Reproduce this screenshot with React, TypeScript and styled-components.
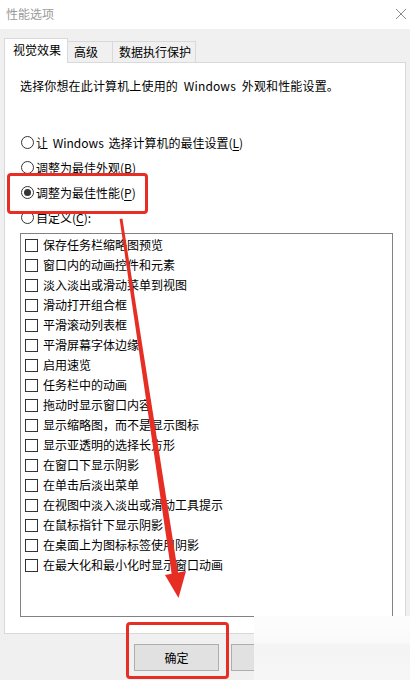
import React from 'react';
import styled, { createGlobalStyle } from 'styled-components';

const GlobalStyle = createGlobalStyle`
  html, body {
    margin: 0;
    padding: 0;
  }
  body {
    width: 410px;
    height: 680px;
    overflow: hidden;
    background: #f0f0f0;
    font-family: 'Noto Sans CJK SC', 'Noto Sans', sans-serif;
    font-size: 12px;
    color: #000;
  }
`;

const radios: { label: string; key: string; checked?: boolean }[] = [
  { label: '让 Windows 选择计算机的最佳设置', key: 'L' },
  { label: '调整为最佳外观', key: 'B' },
  { label: '调整为最佳性能', key: 'P', checked: true },
  { label: '自定义', key: 'C' },
];

const effects = [
  '保存任务栏缩略图预览',
  '窗口内的动画控件和元素',
  '淡入淡出或滑动菜单到视图',
  '滑动打开组合框',
  '平滑滚动列表框',
  '平滑屏幕字体边缘',
  '启用速览',
  '任务栏中的动画',
  '拖动时显示窗口内容',
  '显示缩略图，而不是显示图标',
  '显示亚透明的选择长方形',
  '在窗口下显示阴影',
  '在单击后淡出菜单',
  '在视图中淡入淡出或滑动工具提示',
  '在鼠标指针下显示阴影',
  '在桌面上为图标标签使用阴影',
  '在最大化和最小化时显示窗口动画',
];

export default function App() {
  return (
    <Window>
      <GlobalStyle />
      <TitleBar>
        <Title>性能选项</Title>
        <CloseIcon viewBox="0 0 10 10">
          <path d="M0 0 L10 10 M10 0 L0 10" stroke="#8a8a8a" strokeWidth="1" />
        </CloseIcon>
      </TitleBar>

      <TabStrip>
        <Tab $active $width={64}>视觉效果</Tab>
        <Tab $width={46}>高级</Tab>
        <Tab $width={84}>数据执行保护</Tab>
      </TabStrip>

      <Panel>
        <Intro>选择你想在此计算机上使用的 Windows 外观和性能设置。</Intro>
        <RadioGroup>
          {radios.map((r) => (
            <RadioRow key={r.key}>
              <Radio $checked={!!r.checked} />
              <span>
                {r.label}(<u>{r.key}</u>){r.key === 'C' ? ':' : ''}
              </span>
            </RadioRow>
          ))}
        </RadioGroup>
        <ListBox>
          {effects.map((e) => (
            <CheckRow key={e}>
              <CheckBox />
              <span>{e}</span>
            </CheckRow>
          ))}
        </ListBox>
      </Panel>

      <Footer>
        <Button>确定</Button>
        <Button>取消</Button>
        <Button>应用(A)</Button>
      </Footer>

      <Watermark />
      <Callout $left={7} $top={173} $w={141} $h={41} />
      <Callout $left={126} $top={622} $w={103} $h={57} />
      <ArrowLayer viewBox="0 0 410 680">
        <polygon points="119.6,219 122.4,218.6 178.2,574 171.8,575" fill="#e62e24" />
        <polygon points="165,575 186,571 178.5,598" fill="#e62e24" />
      </ArrowLayer>
    </Window>
  );
}

const Window = styled.div`
  position: relative;
  width: 410px;
  height: 680px;
  background: #f0f0f0;
  overflow: hidden;
`;

const TitleBar = styled.div`
  height: 29px;
  background: #fff;
  display: flex;
  align-items: center;
  justify-content: space-between;
  padding: 0 4px 2px 6px;
  box-sizing: border-box;
`;

const Title = styled.div`
  color: #9a9a9a;
  font-size: 12px;
  line-height: 16px;
`;

const CloseIcon = styled.svg`
  width: 10px;
  height: 10px;
`;

const TabStrip = styled.div`
  display: flex;
  align-items: flex-end;
  height: 24px;
  margin-top: 9px;
  padding-left: 4px;
  position: relative;
  z-index: 1;
`;

const Tab = styled.div<{ $active?: boolean; $width: number }>`
  box-sizing: border-box;
  width: ${(p) => p.$width}px;
  height: ${(p) => (p.$active ? 25 : 21)}px;
  margin-bottom: ${(p) => (p.$active ? -1 : 0)}px;
  margin-left: ${(p) => (p.$active ? 0 : -1)}px;
  border: 1px solid #d9d9d9;
  border-bottom: none;
  background: ${(p) => (p.$active ? '#fff' : '#f0f0f0')};
  padding-left: ${(p) => (p.$active ? 8 : 6)}px;
  line-height: ${(p) => (p.$active ? 22 : 20)}px;
  font-size: 12px;
  white-space: nowrap;
  ${(p) => p.$active && 'z-index: 2; position: relative;'}
`;

const Panel = styled.div`
  box-sizing: border-box;
  width: 402px;
  height: 572px;
  margin-left: 4px;
  background: #fff;
  border: 1px solid #d9d9d9;
  padding: 15px 0 0 15px;
  display: flex;
  flex-direction: column;
`;

const Intro = styled.div`
  line-height: 16px;
  word-spacing: 3px;
  letter-spacing: 0.15px;
`;

const RadioGroup = styled.div`
  margin-top: 36px;
  display: flex;
  flex-direction: column;
`;

const RadioRow = styled.div`
  height: 25px;
  display: flex;
  align-items: center;
  gap: 2px;
  line-height: 16px;
  word-spacing: 2px;

  & u {
    text-decoration-thickness: 1px;
    text-underline-offset: 2px;
  }
`;

const Radio = styled.span<{ $checked: boolean }>`
  box-sizing: border-box;
  width: 13px;
  height: 13px;
  margin-left: 1px;
  border: 1px solid #333;
  border-radius: 50%;
  background: #fff;
  display: flex;
  align-items: center;
  justify-content: center;

  &::after {
    content: '';
    display: ${(p) => (p.$checked ? 'block' : 'none')};
    width: 7px;
    height: 7px;
    border-radius: 50%;
    background: #333;
  }
`;

const ListBox = styled.div`
  box-sizing: border-box;
  width: 373px;
  height: 384px;
  margin-top: 3px;
  border: 1px solid #828282;
  padding-top: 1px;
  display: flex;
  flex-direction: column;
`;

const CheckRow = styled.div`
  height: 20px;
  display: flex;
  align-items: center;
  gap: 5px;
  padding-left: 4px;
  line-height: 16px;
  white-space: nowrap;
`;

const CheckBox = styled.span`
  box-sizing: border-box;
  width: 13px;
  height: 13px;
  border: 1px solid #333;
  background: #fff;
`;

const Footer = styled.div`
  display: flex;
  gap: 12px;
  margin-top: 10px;
  padding-left: 134px;
`;

const Button = styled.div`
  box-sizing: border-box;
  width: 85px;
  height: 27px;
  flex-shrink: 0;
  background: #e1e1e1;
  border: 1px solid #adadad;
  display: flex;
  align-items: center;
  justify-content: center;
  font-size: 12px;
`;

const Watermark = styled.div`
  position: absolute;
  left: 254px;
  top: 616px;
  width: 156px;
  height: 64px;
  background: linear-gradient(
    to bottom,
    #fdfdfd 0%,
    #fafafa 40%,
    #f4f4f4 45%,
    #f6f6f6 100%
  );
`;

const Callout = styled.div<{ $left: number; $top: number; $w: number; $h: number }>`
  position: absolute;
  left: ${(p) => p.$left}px;
  top: ${(p) => p.$top}px;
  width: ${(p) => p.$w}px;
  height: ${(p) => p.$h}px;
  box-sizing: border-box;
  border: 3px solid #e62e24;
  border-radius: 4px;
  pointer-events: none;
`;

const ArrowLayer = styled.svg`
  position: absolute;
  left: 0;
  top: 0;
  width: 410px;
  height: 680px;
  pointer-events: none;
`;
